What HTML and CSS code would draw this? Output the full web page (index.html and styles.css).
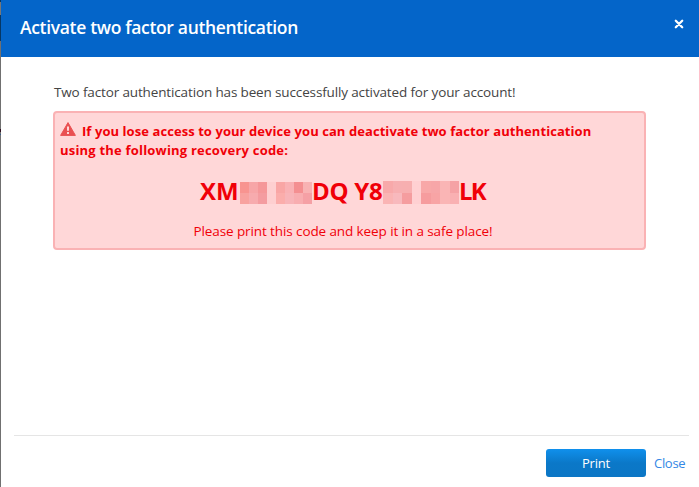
FILE: index.html
```html
<!DOCTYPE html>
<html lang="en">
<head>
<meta charset="utf-8">
<title>Activate two factor authentication</title>
<link rel="stylesheet" href="styles.css">
</head>
<body>
<div class="backdrop"></div>
<div class="dialog">
  <header class="header">
    <h1 class="title">Activate two factor authentication</h1>
    <svg class="dismiss" width="10" height="10" viewBox="0 0 10 10"><path d="M1.8 1.8L8.2 8.2M8.2 1.8L1.8 8.2" stroke="#fff" stroke-width="2.3" stroke-linecap="round"/></svg>
  </header>
  <main class="content">
    <p class="intro">Two factor authentication has been successfully activated for your account!</p>
    <section class="alert">
      <p class="warning"><svg class="triangle" width="16" height="14" viewBox="0 0 16 14"><path d="M8 .6L15.4 13.4H.6Z" fill="#e95052" stroke="#e95052" stroke-width="1" stroke-linejoin="round"/><path d="M7 4.5h2v4.3H7zM7 10h2v2H7z" fill="#ffd7d8"/></svg><span class="line-one">If you lose access to your device you can deactivate two factor authentication</span><br><span class="line-two">using the following recovery code:</span></p>
      <div class="code">
        <span class="part">XM</span>
        <svg class="mosaic first" width="72" height="22" viewBox="0 0 8 2" preserveAspectRatio="none" shape-rendering="crispEdges">
          <path fill="#f89490" d="M0 0h1v1H0z"/><path fill="#f7a5a7" d="M1 0h1v1H1z"/><path fill="#f59799" d="M2 0h1v1H2z"/><path fill="#fecfd0" d="M3 0h1v2H3z"/><path fill="#f9a6a5" d="M4 0h1v1H4z"/><path fill="#f9b1b4" d="M5 0h1v1H5z"/><path fill="#f48f91" d="M6 0h1v1H6z"/><path fill="#f8b2b3" d="M7 0h1v1H7z"/>
          <path fill="#f8a29f" d="M0 1h1v1H0z"/><path fill="#f7abae" d="M1 1h1v1H1z"/><path fill="#f49ca0" d="M2 1h1v1H2z"/><path fill="#fbadab" d="M4 1h1v1H4z"/><path fill="#f8b4b8" d="M5 1h1v1H5z"/><path fill="#f8adb0" d="M6 1h1v1H6z"/><path fill="#f5a0a5" d="M7 1h1v1H7z"/>
        </svg>
        <span class="part middle">DQ Y8</span>
        <svg class="mosaic second" width="76" height="23" viewBox="0 0 8 23" preserveAspectRatio="none" shape-rendering="crispEdges">
          <path fill="#f8a9aa" d="M0 0h1v12H0z"/><path fill="#f7afb1" d="M1 0h1v12H1z"/><path fill="#f7afb0" d="M2 0h1v12H2z"/><path fill="#ffd0d2" d="M3 0h1v23H3z"/><path fill="#f8a8a8" d="M4 0h1v12H4z"/><path fill="#f7a6a8" d="M5 0h1v12H5z"/><path fill="#fab5b5" d="M6 0h1v12H6z"/><path fill="#f5a2a5" d="M7 0h1v12H7z"/>
          <path fill="#fab4b4" d="M0 12h1v11H0z"/><path fill="#f8b9bd" d="M1 12h1v11H1z"/><path fill="#f59d9f" d="M2 12h1v11H2z"/><path fill="#f69c9e" d="M4 12h1v11H4z"/><path fill="#f8a4a5" d="M5 12h1v11H5z"/><path fill="#fab5b5" d="M6 12h1v11H6z"/><path fill="#f9b0b2" d="M7 12h1v11H7z"/>
        </svg>
        <span class="part last">LK</span>
      </div>
      <p class="hint">Please print this code and keep it in a safe place!</p>
    </section>
  </main>
  <footer class="footer">
    <button class="print">Print</button>
    <a class="close">Close</a>
  </footer>
</div>
</body>
</html>
```
FILE: styles.css
```css
* { box-sizing: border-box; }
body {
  margin: 0;
  height: 487px;
  display: flex;
  overflow: hidden;
  font: 14px/19px "Open Sans", "Noto Sans", sans-serif;
  color: #444;
  background: #fff;
}
p, h1 { margin: 0; }
.backdrop {
  width: 1px;
  background: linear-gradient(#063765 0 2px, #777 2px 15px, #063765 15px 41px, #707070 41px 129px, #301020 129px 132px, #707070 132px 134px, #345f91 134px 135px, #707070 135px);
}
.dialog { flex: 1; display: flex; flex-direction: column; }
.header {
  height: 57px;
  padding: 0 15px 0 19px;
  display: flex;
  justify-content: space-between;
  background: #0465c9;
  color: #fff;
}
.title { font-size: 17.5px; line-height: 55px; font-weight: 650; letter-spacing: -0.33px; white-space: nowrap; }
.dismiss { margin-top: 19px; }
.content { flex: 1; padding: 26px 53px 0 52px; }
.intro { padding-left: 1px; white-space: nowrap; font-size: 13.5px; letter-spacing: -0.14px; }
.alert {
  height: 139px;
  margin-top: 9px;
  padding: 9px 5px;
  border: 2px solid #fab2b4;
  border-radius: 4px;
  background: #ffd7d8;
  color: #f00008;
}
.warning { font-size: 13px; font-weight: 700; white-space: nowrap; }
.line-one { letter-spacing: 0.07px; }
.line-two { letter-spacing: 0.2px; }
.triangle { vertical-align: 0; margin-right: 6px; }
.code {
  height: 30px;
  margin: 16px 0 0 140px;
  display: flex;
  font-size: 24px;
  line-height: 30px;
  font-weight: 700;
  white-space: nowrap;
}
.part { width: 40px; }
.middle { width: 71px; letter-spacing: -0.3px; }
.last { letter-spacing: -1.8px; }
.mosaic { flex: none; }
.first { margin-top: 6px; }
.second { margin-top: 5px; }
.hint { margin-top: 16px; padding-right: 13px; text-align: center; font-size: 13.5px; letter-spacing: -0.1px; }
.footer {
  height: 52px;
  margin: 0 10px 0 13px;
  padding: 13px 3px 0 0;
  border-top: 1px solid #e5e5e5;
  display: flex;
  justify-content: flex-end;
  gap: 8px;
}
.print {
  width: 100px;
  height: 28px;
  padding: 0;
  border: 0;
  border-radius: 3px;
  font: inherit;
  font-size: 13px;
  letter-spacing: -0.2px;
  color: #fff;
  background: linear-gradient(#1090ec, #0b78c8 50%, #0b76c5);
}
.close { width: 32px; line-height: 28px; font-size: 13px; letter-spacing: -0.3px; color: #3487e5; }
```
